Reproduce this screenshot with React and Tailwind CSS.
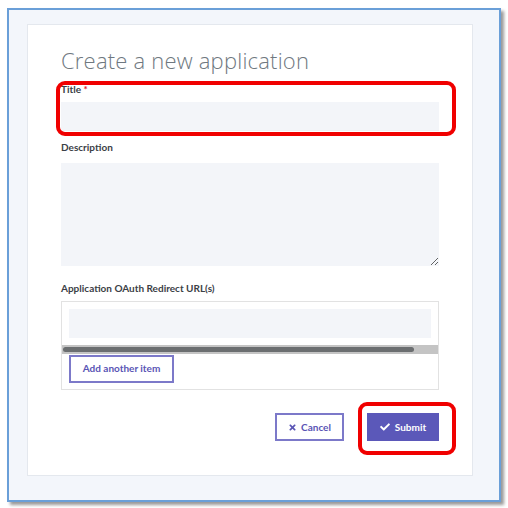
import { FaCheck, FaTimes } from 'react-icons/fa';

export default function App() {
  return (
    <div className="w-[508px] h-[508px] bg-white pl-[7px] pt-[8px]" style={{ fontFamily: '"Open Sans", "Liberation Sans", sans-serif' }}>
      {/* Window frame */}
      <div className="w-[494px] h-[494px] border-2 border-[#6a9fd8] bg-[#f3f6fb] shadow-[3px_3px_3px_rgba(0,0,0,0.4)] pl-[18px] pt-[14px]">
        <div className="relative w-[446px] h-[452px] bg-white border border-[#e4e8ee] px-[33px] pt-[20px]">
          <h1 className="text-[22px] font-light text-[#6f7880] leading-[30px] tracking-[0.2px]">Create a new application</h1>

          <div className="font-['Lato',sans-serif]">
            {/* Title */}
            <label className="block mt-[7px] text-[10px] font-bold text-[#3b4046] leading-[14px]">
              Title <span className="text-[#e0182d]">*</span>
            </label>
            <input className="block mt-[6px] w-full h-[29px] bg-[#f3f5f9] border-b border-[#eef0f4] outline-none" />

            {/* Description */}
            <label className="block mt-[9px] text-[10px] font-bold text-[#3b4046] leading-[14px]">Description</label>
            <textarea className="block mt-[9px] w-full h-[103px] bg-[#f3f5f9] outline-none resize-y" />

            {/* Redirect URLs */}
            <label className="block mt-[15px] text-[10px] font-bold text-[#3b4046] leading-[14px]">Application OAuth Redirect URL(s)</label>
            <div className="mt-[6px] border border-[#e2e2e2] h-[89px] pt-[7px] pb-[8px]">
              <div className="mx-[7px] h-[29px] bg-[#f3f5f9]" />
              <div className="mt-[7px] h-[9px] bg-[#c4c4c4] flex items-center pl-[1px] pr-[24px]">
                <div className="h-[5px] w-full rounded-full bg-[#6b6e70]" />
              </div>
              <button className="ml-[7px] h-[28px] w-[105px] border-2 border-[#7c79c9] text-[10px] font-bold text-[#5a55b5] bg-white">
                Add another item
              </button>
            </div>

            {/* Actions */}
            <div className="mt-[23px] flex justify-end gap-[23px]">
              <button className="h-[28px] w-[69px] border-2 border-[#7c79c9] bg-white text-[10px] font-bold text-[#5a55b5] flex items-center justify-center gap-[4px]">
                <FaTimes className="w-[9px] h-[9px]" /> Cancel
              </button>
              <button className="h-[28px] w-[72px] bg-[#5b58b9] text-[10px] font-bold text-white flex items-center justify-center gap-[5px]">
                <FaCheck className="w-[10px] h-[10px]" /> Submit
              </button>
            </div>
          </div>

          {/* Highlight annotations */}
          <div className="absolute left-[28px] top-[56px] w-[400px] h-[55px] border-4 border-[#f00000] rounded-[9px]" />
          <div className="absolute left-[330px] top-[377px] w-[98px] h-[53px] border-4 border-[#f00000] rounded-[9px]" />
        </div>
      </div>
    </div>
  );
}
